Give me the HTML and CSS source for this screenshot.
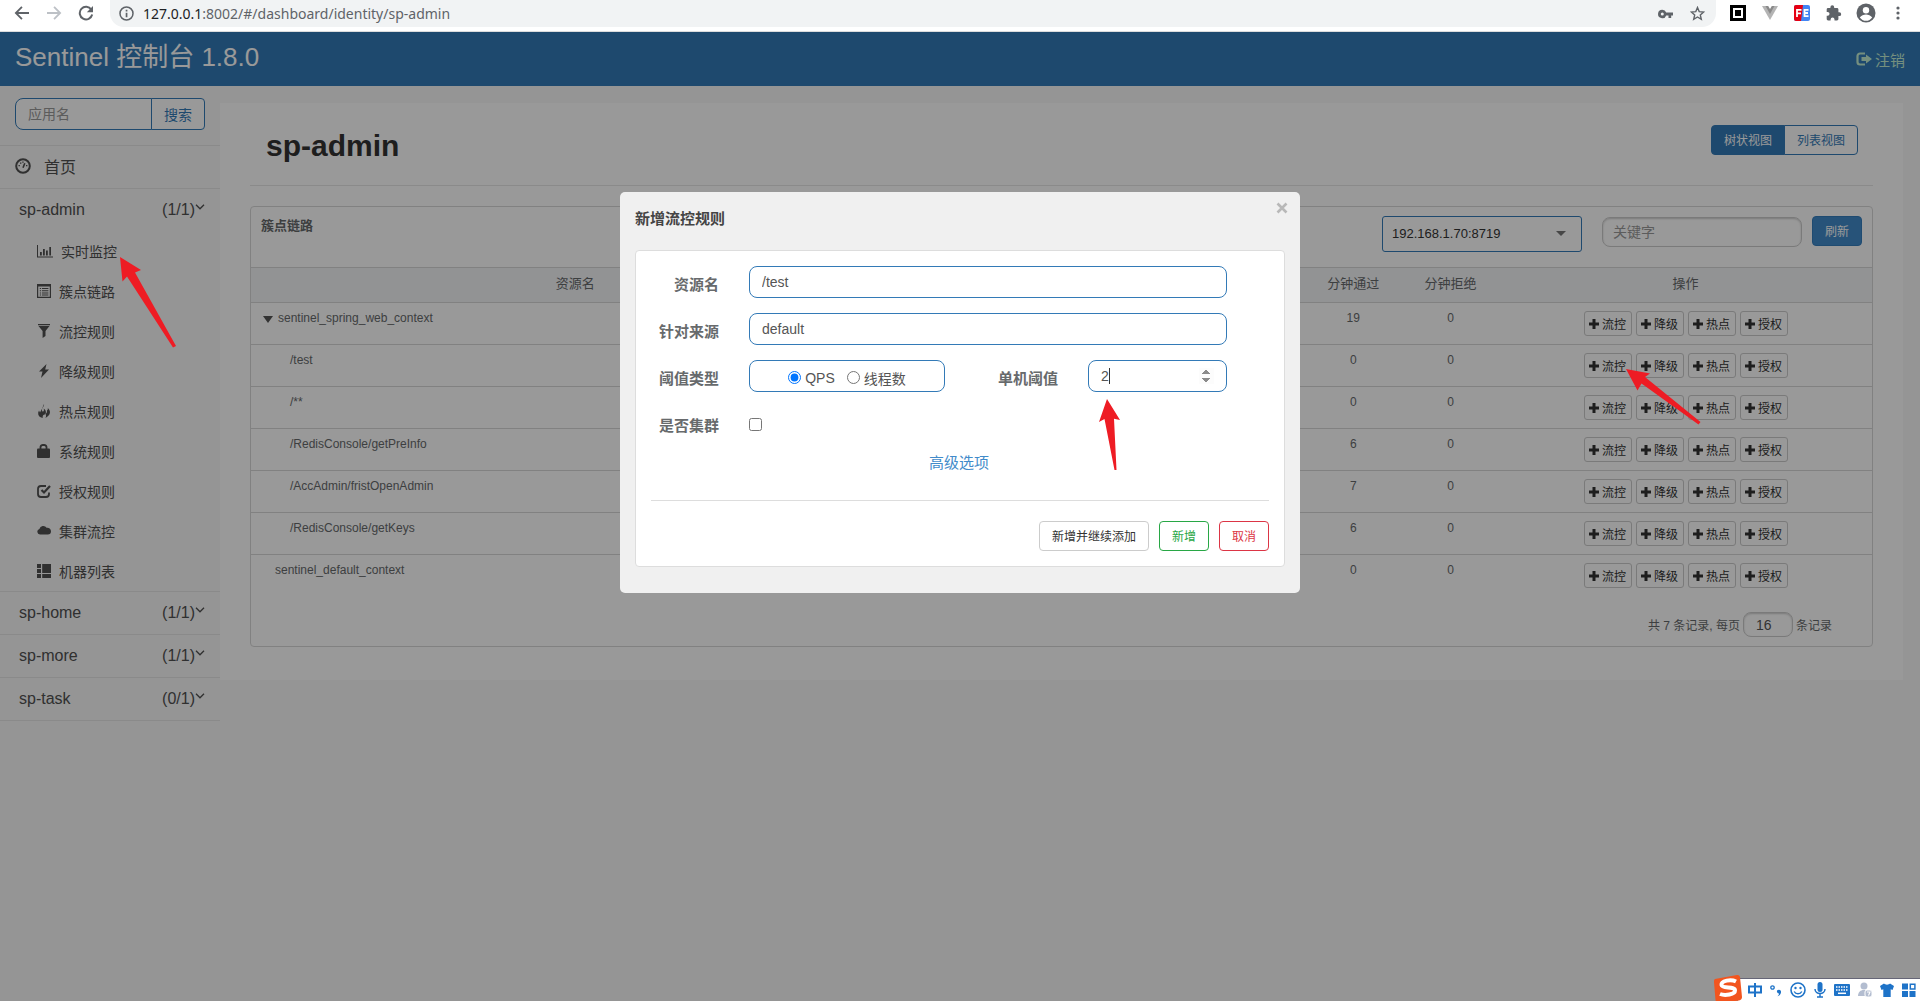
FILE: index.html
```html
<!DOCTYPE html>
<html lang="zh-CN">
<head>
<meta charset="utf-8">
<title>Sentinel 控制台</title>
<link rel="stylesheet" href="styles.css">
</head>
<body>
<svg class="sprite" aria-hidden="true">
  <symbol id="plus" viewBox="0 0 10 10"><path d="M3.500 0h3v3.500H10v3H6.500V10h-3V6.500H0v-3h3.500z"/></symbol>
  <symbol id="chevron" viewBox="0 0 10 6"><path d="M1 .8l4 4 4-4" fill="none" stroke="currentColor" stroke-width="1.300"/></symbol>
</svg>

<div class="browser-bar">
  <button class="nav-btn" aria-label="后退"><svg width="16" height="16" viewBox="0 0 16 16"><path d="M15 7H4.200l4.400-4.400L7.300 1.200.6 8l6.700 6.800 1.300-1.400L4.200 9H15z" fill="#5f6368"/></svg></button>
  <button class="nav-btn" aria-label="前进"><svg width="16" height="16" viewBox="0 0 16 16"><path d="M1 7h10.800L7.400 2.600l1.300-1.400L15.400 8l-6.700 6.800-1.300-1.400L11.800 9H1z" fill="#bdc1c6"/></svg></button>
  <button class="nav-btn" aria-label="刷新页面"><svg width="16" height="16" viewBox="0 0 16 16"><path d="M13.300 4.600A6.300 6.300 0 1 0 14.200 9.600" fill="none" stroke="#5f6368" stroke-width="2"/><path d="M15 1v6.200H8.800z" fill="#5f6368"/></svg></button>
  <div class="address">
    <svg width="15" height="15" viewBox="0 0 15 15"><circle cx="7.500" cy="7.500" r="6.500" fill="none" stroke="#5f6368" stroke-width="1.500"/><path d="M6.700 3.800h1.700v1.700H6.700zM6.700 6.700h1.700v4.500H6.700z" fill="#5f6368"/></svg>
    <span class="url"><b>127.0.0.1</b>:8002/#/dashboard/identity/sp-admin</span>
    <svg width="15" height="10" viewBox="0 0 15 10"><path d="M4.300.8a4.200 4.200 0 1 0 3.900 5.600h2.300V9h2.700V6.400H15V3.600H8.200A4.200 4.200 0 0 0 4.300.8zm0 2.700a1.500 1.500 0 1 1 0 3 1.500 1.500 0 0 1 0-3z" fill="#5f6368"/></svg>
    <svg width="15" height="15" viewBox="0 0 15 15"><path d="M7.500 1.500l1.700 4.100 4.500.4-3.400 2.900 1 4.400-3.800-2.300-3.800 2.300 1-4.400L1.300 6l4.500-.4z" fill="none" stroke="#5f6368" stroke-width="1.400"/></svg>
  </div>
  <div class="extensions">
    <svg width="16" height="16" viewBox="0 0 16 16"><path d="M0 0h16v16H0z" fill="#000"/><path d="M3 3h10v10H3z" fill="#fff"/><path d="M5 5h6v6H5z" fill="#000"/></svg>
    <svg width="16" height="16" viewBox="0 0 16 16"><path d="M0 1h16L8 15z" fill="#b4b4b4"/><path d="M3.500 1h9L8 9z" fill="#8a8a8a"/><path d="M6.200 1h3.600L8 4z" fill="#fff"/></svg>
    <svg width="16" height="16" viewBox="0 0 16 16"><rect width="16" height="16" rx="2" fill="#4285f4"/><path d="M2 0h7L7 16H2a2 2 0 0 1-2-2V2a2 2 0 0 1 2-2z" fill="#e60012"/><path d="M3 12V4.800h4.500M3 8.300h4M14.500 4.800h-4v6.400h4M10.500 8h3.500" fill="none" stroke="#fff" stroke-width="1.800"/></svg>
    <svg width="16" height="16" viewBox="0 0 16 16"><path d="M13.300 7.300h-.9V4.500c0-.8-.6-1.400-1.400-1.400H8.200v-.9a1.900 1.900 0 0 0-3.800 0v.9H2c-.7 0-1.300.6-1.300 1.300v2.500h.9a1.900 1.900 0 0 1 0 3.900H.7V14c0 .8.600 1.400 1.400 1.400h2.500v-.9a1.900 1.900 0 0 1 3.900 0v.9H11c.8 0 1.400-.6 1.400-1.400v-2.900h.9a1.900 1.900 0 0 0 0-3.800z" fill="#5f6368"/></svg>
    <svg width="20" height="20" viewBox="0 0 20 20"><circle cx="10" cy="10" r="9.500" fill="#5f6368"/><circle cx="10" cy="7.200" r="3.200" fill="#fff"/><path d="M3.800 14.600c1.300-2 4.100-3 6.200-3s4.900 1 6.200 3a7.600 7.600 0 0 1-12.400 0z" fill="#fff"/></svg>
    <svg width="4" height="14" viewBox="0 0 4 14"><circle cx="2" cy="2" r="1.600" fill="#5f6368"/><circle cx="2" cy="7" r="1.600" fill="#5f6368"/><circle cx="2" cy="12" r="1.600" fill="#5f6368"/></svg>
  </div>
</div>

<div class="viewport">
  <header class="app-header">
    <div class="brand">Sentinel 控制台 1.8.0</div>
    <a class="logout" href="#"><svg width="16" height="14" viewBox="0 0 16 14"><path d="M9 1.500H4A2.500 2.500 0 0 0 1.500 4v6A2.500 2.500 0 0 0 4 12.500h5" fill="none" stroke="currentColor" stroke-width="2.200"/><path d="M10 2.500L16 7l-6 4.500V9H5.500V5H10z" fill="currentColor"/></svg>注销</a>
  </header>

  <div class="columns">
    <nav class="sidebar">
      <form class="search">
        <input type="text" placeholder="应用名" aria-label="应用名">
        <button type="button">搜索</button>
      </form>
      <a class="home" href="#"><svg width="16" height="16" viewBox="0 0 16 16"><circle cx="8" cy="8" r="6.800" fill="none" stroke="currentColor" stroke-width="2"/><path d="M8 9.800l1.800-4.600" stroke="currentColor" stroke-width="1.600"/><path d="M3.500 7h1.400v1.300H3.500zM5 4.500h1.400v1.300H5zM11 7h1.400v1.300H11zM7.300 3.500h1.300v1.300H7.300z"/></svg>首页</a>
      <a class="app" href="#"><span>sp-admin</span><span class="count">(1/1)<svg width="10" height="6"><use href="#chevron"/></svg></span></a>
      <ul class="menu">
        <li><a href="#"><svg width="16" height="14" viewBox="0 0 16 14"><path d="M0 1h1v11.500h15V13.500H0zM3 8h1.800v3.500H3zM6 5h1.800v6.500H6zM9 6.500h1.800v5H9zM12.300 3H14v8.500h-1.700z"/></svg>实时监控</a></li>
        <li><a href="#"><svg width="14" height="14" viewBox="0 0 14 14"><path d="M0 0h14v14H0zM1.200 2.600v10.200h11.600V2.600z" fill-rule="evenodd"/><path d="M2.800 4h1.300v1H2.800zM5 4h6.400v1H5zM2.800 6.200h1.300v1H2.800zM5 6.200h6.400v1H5zM2.800 8.400h1.300v1H2.800zM5 8.400h6.400v1H5zM2.800 10.600h1.300v1H2.800zM5 10.600h6.400v1H5z"/></svg>簇点链路</a></li>
        <li><a href="#"><svg width="14" height="14" viewBox="0 0 14 14"><path d="M1 0h12v1.200H1zM1.500 2h11L8.500 7v5L5.600 14V7z"/></svg>流控规则</a></li>
        <li><a href="#"><svg width="14" height="14" viewBox="0 0 14 14"><path d="M9.500 0L2 7.500h3.500L4 14l8-8.500H8.200z"/></svg>降级规则</a></li>
        <li><a href="#"><svg width="14" height="14" viewBox="0 0 14 14"><path d="M7 0c.5 2.500-2 3.500-2 6 0 1.500.8 2 1.500 1.300.7-.8.300-1.800.3-2.800 2 1.500 2.700 3.500 1.700 5.300 1.300-.3 1.700-1.800 1.500-3.300.8-.5 1-1.500.8-2.500 2.700 2.200 3.200 6-.3 8.500L8.500 14c1-2 .5-3.500-.5-4.500 0 1-.5 1.300-1 1.300-1 .2-1.500 1.500-1.300 3.200C2.500 13.500.8 11.500 1.200 8.500l.8-2 1 2C4.500 6 5.500 3.500 7 0z"/></svg>热点规则</a></li>
        <li><a href="#"><svg width="14" height="14" viewBox="0 0 14 14"><path d="M3.500 5V3a2.500 2.500 0 0 1 2.500-2h1A2.500 2.500 0 0 1 9.500 3v2" fill="none" stroke="currentColor" stroke-width="1.800"/><rect y="4.500" width="13" height="9.500" rx="1"/></svg>系统规则</a></li>
        <li><a href="#"><svg width="14" height="14" viewBox="0 0 14 14"><path d="M9 2H4a3 3 0 0 0-3 3v5a3 3 0 0 0 3 3h5a3 3 0 0 0 3-3V8.500" fill="none" stroke="currentColor" stroke-width="1.800"/><path d="M4.500 6l2.500 2.500L13 2" fill="none" stroke="currentColor" stroke-width="2.200"/></svg>授权规则</a></li>
        <li><a href="#"><svg width="14" height="14" viewBox="0 0 14 14"><path d="M3 10.500A2.800 2.800 0 0 1 2.400 5a4 4 0 0 1 7.200-1.200A3.500 3.500 0 0 1 14 7.200a3.300 3.300 0 0 1-3.300 3.300z"/></svg>集群流控</a></li>
        <li><a href="#"><svg width="14" height="14" viewBox="0 0 14 14"><path d="M0 0h4v4H0zM0 5h4v4H0zM0 10h4v4H0zM5.200 0H14v9H5.200zM5.200 10H14v4H5.200z"/></svg>机器列表</a></li>
      </ul>
      <a class="app" href="#"><span>sp-home</span><span class="count">(1/1)<svg width="10" height="6"><use href="#chevron"/></svg></span></a>
      <a class="app" href="#"><span>sp-more</span><span class="count">(1/1)<svg width="10" height="6"><use href="#chevron"/></svg></span></a>
      <a class="app" href="#"><span>sp-task</span><span class="count">(0/1)<svg width="10" height="6"><use href="#chevron"/></svg></span></a>
    </nav>

    <main class="panel">
      <div class="page-title">
        <h1>sp-admin</h1>
        <div class="view-switch"><button class="active">树状视图</button><button>列表视图</button></div>
      </div>
      <section class="card">
        <div class="card-head">
          <h2>簇点链路</h2>
          <div class="machine"><select aria-label="机器"><option>192.168.1.70:8719</option></select></div>
          <input class="keyword" type="text" placeholder="关键字" aria-label="关键字">
          <button class="refresh">刷新</button>
        </div>
        <table>
          <colgroup><col class="c-name"><col><col class="c-num"><col class="c-num"><col class="c-act"></colgroup>
          <thead><tr><th>资源名</th><th></th><th>分钟通过</th><th>分钟拒绝</th><th>操作</th></tr></thead>
          <tbody>
            <tr><td class="root"><i class="caret-down"></i>sentinel_spring_web_context</td><td></td><td>19</td><td>0</td><td class="ops"><div><button><svg><use href="#plus"/></svg>流控</button><button><svg><use href="#plus"/></svg>降级</button><button><svg><use href="#plus"/></svg>热点</button><button><svg><use href="#plus"/></svg>授权</button></div></td></tr>
            <tr><td class="child">/test</td><td></td><td>0</td><td>0</td><td class="ops"><div><button><svg><use href="#plus"/></svg>流控</button><button><svg><use href="#plus"/></svg>降级</button><button><svg><use href="#plus"/></svg>热点</button><button><svg><use href="#plus"/></svg>授权</button></div></td></tr>
            <tr><td class="child">/**</td><td></td><td>0</td><td>0</td><td class="ops"><div><button><svg><use href="#plus"/></svg>流控</button><button><svg><use href="#plus"/></svg>降级</button><button><svg><use href="#plus"/></svg>热点</button><button><svg><use href="#plus"/></svg>授权</button></div></td></tr>
            <tr><td class="child">/RedisConsole/getPreInfo</td><td></td><td>6</td><td>0</td><td class="ops"><div><button><svg><use href="#plus"/></svg>流控</button><button><svg><use href="#plus"/></svg>降级</button><button><svg><use href="#plus"/></svg>热点</button><button><svg><use href="#plus"/></svg>授权</button></div></td></tr>
            <tr><td class="child">/AccAdmin/fristOpenAdmin</td><td></td><td>7</td><td>0</td><td class="ops"><div><button><svg><use href="#plus"/></svg>流控</button><button><svg><use href="#plus"/></svg>降级</button><button><svg><use href="#plus"/></svg>热点</button><button><svg><use href="#plus"/></svg>授权</button></div></td></tr>
            <tr><td class="child">/RedisConsole/getKeys</td><td></td><td>6</td><td>0</td><td class="ops"><div><button><svg><use href="#plus"/></svg>流控</button><button><svg><use href="#plus"/></svg>降级</button><button><svg><use href="#plus"/></svg>热点</button><button><svg><use href="#plus"/></svg>授权</button></div></td></tr>
            <tr><td class="leaf">sentinel_default_context</td><td></td><td>0</td><td>0</td><td class="ops"><div><button><svg><use href="#plus"/></svg>流控</button><button><svg><use href="#plus"/></svg>降级</button><button><svg><use href="#plus"/></svg>热点</button><button><svg><use href="#plus"/></svg>授权</button></div></td></tr>
          </tbody>
        </table>
        <div class="pager">
          <label for="size">共 7 条记录, 每页</label>
          <input id="size" type="text" value="16">
          <span>条记录</span>
        </div>
      </section>
    </main>
  </div>

  <div class="backdrop"></div>
  <div class="dialog" role="dialog" aria-labelledby="dlg-title">
    <button class="close" aria-label="关闭"><svg width="12" height="12" viewBox="0 0 12 12"><path d="M1.500 1.500l9 9M10.500 1.500l-9 9" stroke="#b8b8b8" stroke-width="2.600"/></svg></button>
    <h3 id="dlg-title">新增流控规则</h3>
    <form class="rule">
      <div class="grid">
        <label for="res">资源名</label>
        <input class="field full" id="res" type="text" value="/test">
        <label for="origin">针对来源</label>
        <input class="field full" id="origin" type="text" value="default">
        <span class="label">阈值类型</span>
        <div class="field radios">
          <input type="radio" name="grade" id="qps" checked><label for="qps">QPS</label>
          <input type="radio" name="grade" id="thread"><label for="thread">线程数</label>
        </div>
        <label for="limit">单机阈值</label>
        <div class="number"><input class="field" id="limit" type="number" value="2"><i class="text-caret"></i></div>
        <label for="cluster">是否集群</label>
        <input type="checkbox" id="cluster">
      </div>
      <a class="advanced" href="#">高级选项</a>
      <div class="actions">
        <button type="button">新增并继续添加</button>
        <button type="button" class="ok">新增</button>
        <button type="button" class="cancel">取消</button>
      </div>
    </form>
  </div>
</div>

<svg class="arrows" width="1720" height="480" aria-hidden="true">
  <path fill="#ee1c24" d="M120 257l21 13-6 2.500 41 73.500-3 1.500-46-71-4.500 5zM1107 399l13 21-6-1.300 2.500 51.300h-2l-10-51-5.500 3zM1626 369l24 4.500-5 3.500 55.500 45-2 2.500-57-41-4 7z"/>
</svg>

<div class="ime">
  <svg class="sogou" width="28" height="26" viewBox="0 0 28 26"><path d="M1 4L23 0c1.500 0 2.500.5 3 2l2 20c0 2-1 3-3 3.500L5 28c-2 0-3-1-3.500-3L0 7c0-1.500 0-2.500 1-3z" fill="#f2551f"/><path d="M22 6.500C17 4 7 5.500 7.500 10c.5 4 13.500 1 13.500 5.500 0 4-10 5.500-15 3.500" fill="none" stroke="#fff" stroke-width="4"/></svg>
  <svg width="14" height="16" viewBox="0 0 14 16"><path d="M1 4.500h12v6H1zM7 1v14" fill="none" stroke="#1e73c8" stroke-width="2"/></svg>
  <svg width="12" height="16" viewBox="0 0 12 16"><circle cx="2.500" cy="5.500" r="1.700" fill="none" stroke="#1e73c8" stroke-width="1.300"/><path d="M7 8.500c2-1.500 4.500-.5 4 2-.3 2-1.700 3.200-3.500 3.800 1-1 1.500-1.800 1.500-2.800-1.500 0-2.500-1.500-2-3z" fill="#1e73c8"/></svg>
  <svg width="16" height="16" viewBox="0 0 16 16"><circle cx="8" cy="8" r="7" fill="none" stroke="#1e73c8" stroke-width="1.600"/><circle cx="5.500" cy="6" r="1.200" fill="#1e73c8"/><circle cx="10.500" cy="6" r="1.200" fill="#1e73c8"/><path d="M4.200 9.500c1.500 3 6 3 7.600 0" fill="none" stroke="#1e73c8" stroke-width="1.400"/></svg>
  <svg width="12" height="16" viewBox="0 0 12 16"><rect x="3.500" width="5" height="10" rx="2.500" fill="#1e73c8"/><path d="M1 7c0 6 10 6 10 0M6 11.500V15M3 15h6" fill="none" stroke="#1e73c8" stroke-width="1.500"/></svg>
  <svg width="16" height="16" viewBox="0 0 16 16"><rect y="2" width="16" height="12" rx="1" fill="#1e73c8"/><path d="M2 5h12M2 8h12" stroke="#fff" stroke-width="1.500" stroke-dasharray="1.500 1"/><path d="M4 11.300h8" stroke="#fff" stroke-width="1.500"/></svg>
  <svg width="14" height="16" viewBox="0 0 14 16"><circle cx="6" cy="4" r="3.500" fill="#b3bdd0"/><path d="M0 14c0-8 11-8 12 0z" fill="#b3bdd0"/><rect x="7" y="8" width="7" height="7" rx="2" fill="#b3bdd0" stroke="#fff"/><path d="M9 10h3l-1.500 3.500" fill="none" stroke="#fff" stroke-width="1.100"/></svg>
  <svg width="14" height="16" viewBox="0 0 14 16"><path d="M4 1.500c1 1.500 5 1.500 6 0L14 4l-1.500 4-1.800-.7V15H3.300V7.300L1.500 8 0 4z" fill="#1e73c8"/></svg>
  <svg width="14" height="16" viewBox="0 0 14 16"><path d="M0 1.500h6v6H0zM0 9h6v6H0zM7.500 9h6v6h-6z" fill="#1e73c8"/><path d="M8.300 2.300h4.600v4.600H8.300z" fill="none" stroke="#1e73c8" stroke-width="1.500"/></svg>
</div>
</body>
</html>
```

FILE: styles.css
```css
* { box-sizing: border-box; }

body {
  margin: 0;
  min-height: 100vh;
  display: flex;
  flex-direction: column;
  font-family: "Liberation Sans", "Noto Sans CJK SC", sans-serif;
  font-size: 12px;
  color: #676a6c;
  background: #f8f8f8;
}

button, input, select { font-family: inherit; margin: 0; }
svg { flex: none; fill: currentColor; }
a { text-decoration: none; color: inherit; }
.sprite { position: absolute; width: 0; height: 0; }

/* browser toolbar */
.browser-bar {
  height: 32px;
  display: flex;
  align-items: flex-start;
  padding-left: 14px;
  background: #fff;
  border-bottom: 1px solid #dcdcdc;
}
.nav-btn {
  width: 16px;
  height: 26px;
  margin-right: 16px;
  padding: 0;
  border: 0;
  background: none;
  display: flex;
  align-items: center;
}
.address {
  flex: 1;
  height: 27px;
  display: flex;
  align-items: center;
  gap: 17px;
  padding: 0 11px 0 9px;
  background: #f1f3f4;
  border-radius: 0 0 14px 14px;
}
.url {
  flex: 1;
  margin-left: -8px;
  font-family: "Noto Sans", "Open Sans", sans-serif;
  font-size: 14px;
  line-height: 24px;
  color: #5f6368;
}
.url b { font-weight: 400; color: #202124; }
.extensions {
  height: 26px;
  display: grid;
  grid-template-columns: repeat(6, 32px);
  align-items: center;
  justify-items: center;
  padding: 0 6px;
}

/* application */
.viewport { position: relative; flex: 1; }
.app-header {
  height: 54px;
  display: flex;
  align-items: center;
  justify-content: space-between;
  padding: 0 15px;
  background: #337ab7;
}
.brand { font-size: 26px; line-height: 48px; padding-bottom: 4px; color: #fff; }
.logout {
  display: flex;
  align-items: center;
  gap: 3px;
  font-size: 15px;
  color: #c4efd4;
}
.columns { display: flex; align-items: flex-start; padding-right: 17px; }

.sidebar { width: 220px; color: #505050; }
.search { display: flex; padding: 12px 15px 15px; }
.search input {
  flex: 1;
  min-width: 0;
  height: 32px;
  padding: 0 12px;
  font-size: 14px;
  border: 1px solid #337ab7;
  border-radius: 8px 0 0 8px;
  background: #fff;
}
.search input::placeholder, .keyword::placeholder { color: #999; }
.search button {
  width: 54px;
  height: 32px;
  margin-left: -1px;
  padding: 0;
  font-size: 14px;
  color: #337ab7;
  background: #fff;
  border: 1px solid #337ab7;
  border-radius: 0 4px 4px 0;
}
.home, .app {
  height: 43px;
  display: flex;
  align-items: center;
  font-size: 16px;
  border-top: 1px solid #e7e7e7;
}
.home { padding: 0 15px 2px; gap: 13px; }
.app { justify-content: space-between; padding: 0 15px 0 19px; }
.app:last-child { height: 44px; border-bottom: 1px solid #e7e7e7; }
.count { display: flex; align-items: center; }
.count svg { margin-bottom: 6px; }
.menu { list-style: none; margin: 0; padding: 0; }
.menu a {
  height: 40px;
  display: flex;
  align-items: center;
  gap: 8px;
  padding-left: 37px;
  padding-bottom: 1px;
  font-size: 14px;
}

.panel {
  flex: 1;
  min-width: 0;
  margin-top: 17px;
  padding: 0 30px 33px;
  background: #fff;
}
.page-title {
  display: flex;
  justify-content: space-between;
  align-items: flex-start;
  padding: 22px 15px 19px 16px;
  border-bottom: 1px solid #e7e7e7;
}
h1 { margin: 0; font-size: 30px; line-height: 41px; color: #333; }
.view-switch { display: flex; }
.view-switch button {
  width: 74px;
  height: 30px;
  padding: 0 0 1px;
  font-size: 12px;
  color: #337ab7;
  background: #fff;
  border: 1px solid #337ab7;
  border-radius: 0 4px 4px 0;
}
.view-switch button + button { margin-left: -1px; }
.view-switch .active { color: #fff; background: #337ab7; border-radius: 4px 0 0 4px; }

.card { margin-top: 20px; border: 1px solid #d8d8d8; border-radius: 4px; }
.card-head {
  height: 61px;
  display: flex;
  align-items: flex-start;
  padding: 9px 10px 0;
  border-bottom: 1px solid #d8d8d8;
}
h2 { flex: 1; margin: 0; font-size: 13px; line-height: 20px; }
.machine { position: relative; width: 200px; margin-right: 20px; }
.machine select {
  width: 100%;
  height: 36px;
  padding: 0 9px 2px;
  font-size: 13px;
  color: #333;
  background: #fff;
  border: 1px solid #337ab7;
  border-radius: 3px;
  appearance: none;
}
.machine::after {
  content: "";
  position: absolute;
  right: 16px;
  top: 15px;
  border: 5px solid transparent;
  border-top-color: #777;
  border-bottom: 0;
}
.keyword {
  width: 200px;
  height: 30px;
  margin-top: 1px;
  margin-right: 10px;
  padding: 0 10px;
  font-size: 14px;
  border: 1px solid #ccc;
  border-radius: 8px;
  box-shadow: inset 0 1px 2px #ccc;
}
.refresh {
  width: 50px;
  height: 30px;
  padding: 0 0 2px;
  font-size: 12px;
  color: #fff;
  background: #428bca;
  border: 1px solid #357ebd;
  border-radius: 4px;
}

table { width: 100%; table-layout: fixed; border-collapse: separate; border-spacing: 0; }
.c-name { width: 40%; }
.c-num { width: 6%; }
.c-act { width: 23%; }
th {
  height: 35px;
  padding: 0 0 2px;
  font-size: 13px;
  font-weight: 400;
  line-height: 18px;
  background: #f3f5f7;
}
td { padding: 8px 0; height: 42px; line-height: 15px; vertical-align: top; text-align: center; }
td:first-child { text-align: left; }
th, td { border-bottom: 1px solid #d8d8d8; }
tr:last-child td { border-bottom: 0; }
td.root { padding-left: 12px; }
td.child { padding-left: 39px; }
td.leaf { padding-left: 24px; }
.caret-down {
  display: inline-block;
  margin-right: 5px;
  border: 5px solid transparent;
  border-top: 7px solid #555;
  border-bottom: 0;
  vertical-align: -1px;
}
.ops div { display: flex; justify-content: center; gap: 4px; }
.ops button {
  width: 48px;
  height: 25px;
  display: flex;
  align-items: center;
  justify-content: center;
  gap: 3px;
  padding: 0;
  font-size: 12px;
  color: #333;
  background: #fff;
  border: 1px solid #ccc;
  border-radius: 3px;
}
.ops button svg { width: 10px; height: 10px; }
.pager {
  display: flex;
  align-items: center;
  justify-content: flex-end;
  gap: 3px;
  padding: 15px 40px 9px;
}
.pager input {
  width: 50px;
  height: 25px;
  padding: 0 12px;
  font-size: 14px;
  color: #555;
  border: 1px solid #ccc;
  border-radius: 8px;
  box-shadow: inset 0 1px 2px #ccc;
}

/* dialog */
.backdrop { position: absolute; inset: 0; background: rgba(0, 0, 0, .4); }
.dialog {
  position: absolute;
  top: 160px;
  left: 50%;
  width: 680px;
  margin-left: -340px;
  padding: 16px 15px 26px;
  background: #f0f0f0;
  border-radius: 5px;
}
.close { position: absolute; top: 10px; right: 12px; padding: 0; border: 0; background: none; line-height: 0; }
h3 { margin: 0 0 20px; font-size: 15px; line-height: 22px; color: #444; }
.rule {
  padding: 15px;
  background: #fff;
  border: 1px solid #ddd;
  border-radius: 4px;
}
.grid {
  display: grid;
  grid-template-columns: 68px 196px 83px 139px;
  grid-auto-rows: 32px;
  column-gap: 30px;
  row-gap: 15px;
  align-items: center;
}
.grid > label, .label { padding-top: 3px; text-align: right; font-size: 15px; font-weight: 700; }
.field {
  width: 100%;
  height: 32px;
  padding: 0 12px;
  font-size: 14px;
  color: #555;
  background: #fff;
  border: 1px solid #337ab7;
  border-radius: 8px;
}
.full { grid-column: 2 / 5; }
.radios { display: flex; align-items: center; justify-content: center; padding-top: 3px; }
.radios input { width: 13px; height: 13px; margin-right: 4px; }
.radios label + input { margin-left: 12px; }
.number { position: relative; }
.number input::-webkit-inner-spin-button { opacity: 1; }
.text-caret { position: absolute; left: 21px; top: 8px; width: 1px; height: 16px; background: #333; }
input[type="checkbox"] { width: 13px; height: 13px; margin-top: 3px; }
.advanced {
  display: block;
  width: 62px;
  margin: 12px auto 0;
  font-size: 15px;
  line-height: 24px;
  white-space: nowrap;
  color: #428bca;
}
.actions {
  display: flex;
  justify-content: flex-end;
  gap: 10px;
  margin-top: 25px;
  padding-top: 20px;
  border-top: 1px solid #ddd;
}
.actions button {
  height: 30px;
  padding: 0 12px 1px;
  font-size: 12px;
  color: #333;
  background: #fff;
  border: 1px solid #ccc;
  border-radius: 4px;
}
.actions .ok { color: #28a745; border-color: #28a745; }
.actions .cancel { color: #dc3545; border-color: #dc3545; }

/* pointers drawn over the page */
.arrows { position: absolute; top: 0; left: 0; }

/* input method tray */
.ime {
  position: fixed;
  right: 0;
  bottom: 0;
  height: 23px;
  display: flex;
  align-items: center;
  gap: 8px;
  padding-right: 4px;
  background: #fff;
  border-top: 1px solid #667;
}
.sogou { margin: -4px -2px 0 -24px; }
```
